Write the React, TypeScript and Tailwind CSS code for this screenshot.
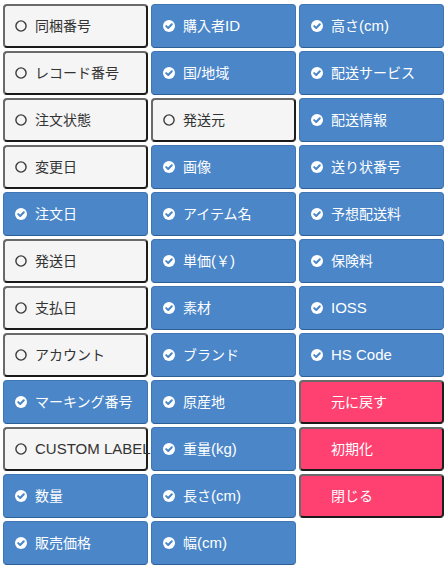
import React from "react";

type Kind = "off" | "on" | "action";
type Item = { label: string; kind: Kind } | null;

const items: Item[] = [
  { label: "同梱番号", kind: "off" },
  { label: "購入者ID", kind: "on" },
  { label: "高さ(cm)", kind: "on" },
  { label: "レコード番号", kind: "off" },
  { label: "国/地域", kind: "on" },
  { label: "配送サービス", kind: "on" },
  { label: "注文状態", kind: "off" },
  { label: "発送元", kind: "off" },
  { label: "配送情報", kind: "on" },
  { label: "変更日", kind: "off" },
  { label: "画像", kind: "on" },
  { label: "送り状番号", kind: "on" },
  { label: "注文日", kind: "on" },
  { label: "アイテム名", kind: "on" },
  { label: "予想配送料", kind: "on" },
  { label: "発送日", kind: "off" },
  { label: "単価(￥)", kind: "on" },
  { label: "保険料", kind: "on" },
  { label: "支払日", kind: "off" },
  { label: "素材", kind: "on" },
  { label: "IOSS", kind: "on" },
  { label: "アカウント", kind: "off" },
  { label: "ブランド", kind: "on" },
  { label: "HS Code", kind: "on" },
  { label: "マーキング番号", kind: "on" },
  { label: "原産地", kind: "on" },
  { label: "元に戻す", kind: "action" },
  { label: "CUSTOM LABEL", kind: "off" },
  { label: "重量(kg)", kind: "on" },
  { label: "初期化", kind: "action" },
  { label: "数量", kind: "on" },
  { label: "長さ(cm)", kind: "on" },
  { label: "閉じる", kind: "action" },
  { label: "販売価格", kind: "on" },
  { label: "幅(cm)", kind: "on" },
  null,
];

function Label({ text }: { text: string }) {
  const runs = text.match(/[\x20-\x7e]+|[^\x20-\x7e]+/g) || [];
  return (
    <span className="leading-none">
      {runs.map((r, i) =>
        /^[\x20-\x7e]+$/.test(r) ? (
          <span key={i} className="text-[15px]">
            {r}
          </span>
        ) : (
          <span key={i} className="text-[14px]">
            {r}
          </span>
        )
      )}
    </span>
  );
}

function CheckIcon() {
  return (
    <svg width="12" height="12" viewBox="0 0 12 12" className="shrink-0">
      <circle cx="6" cy="6" r="6" fill="#ffffff" />
      <path d="M3.2 6.1 L5.2 8 L8.8 4.3" fill="none" stroke="#4a86c8" strokeWidth="2" strokeLinecap="round" strokeLinejoin="round" />
    </svg>
  );
}

function EmptyIcon() {
  return (
    <svg width="12" height="12" viewBox="0 0 12 12" className="shrink-0">
      <circle cx="6" cy="6" r="5.1" fill="none" stroke="#3a3a3a" strokeWidth="1.4" />
    </svg>
  );
}

function Cell({ item }: { item: Item }) {
  if (!item) return <div />;
  if (item.kind === "on") {
    return (
      <div className="flex h-[44px] items-center gap-[8px] overflow-visible whitespace-nowrap rounded-[4px] border border-[#3f76b3] border-b-[#2e5f96] bg-[#4a86c8] pl-[11px] text-white">
        <CheckIcon />
        <Label text={item.label} />
      </div>
    );
  }
  if (item.kind === "off") {
    return (
      <div className="flex h-[44px] items-center gap-[8px] overflow-visible whitespace-nowrap rounded-[4px] border-2 border-[#6a6a6a] border-r-[#1e1e1e] border-b-[#1a1a1a] bg-[#f5f5f5] pl-[10px] text-[#333333]">
        <EmptyIcon />
        <Label text={item.label} />
      </div>
    );
  }
  return (
    <div className="flex h-[44px] items-center gap-[8px] whitespace-nowrap rounded-[4px] border-2 border-[#6a6a6a] border-r-[#1e1e1e] border-b-[#1a1a1a] bg-[#fe4170] pl-[10px] text-white">
      <span className="w-[12px] shrink-0" />
      <Label text={item.label} />
    </div>
  );
}

export default function App() {
  return (
    <div
      className="h-[570px] w-[446px] bg-white"
      style={{ fontFamily: '"Liberation Sans", "Noto Sans CJK JP", sans-serif' }}
    >
      <div className="grid grid-cols-[145px_145px_145px] gap-x-[3px] gap-y-[3px] pl-[3px] pt-[4px]">
        {items.map((it, i) => (
          <Cell key={i} item={it} />
        ))}
      </div>
    </div>
  );
}
